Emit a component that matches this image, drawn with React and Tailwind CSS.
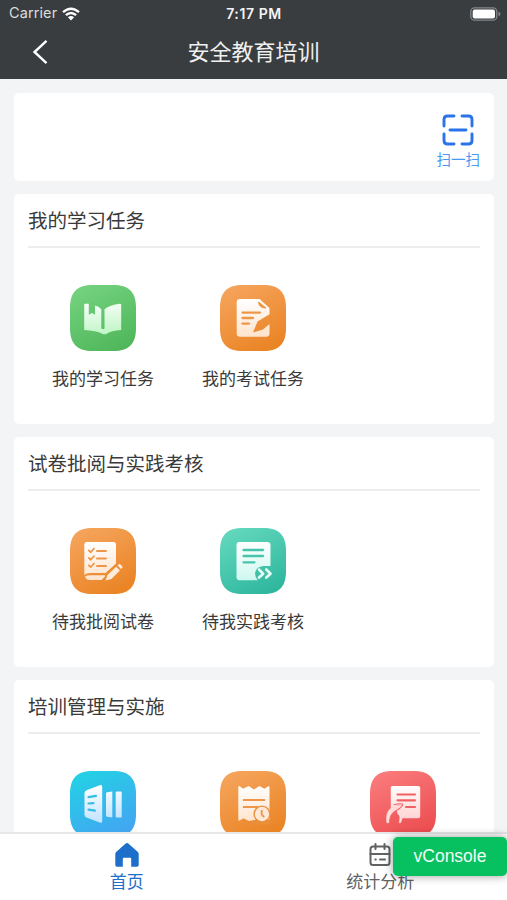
import React from 'react';

const Tile = ({ id, from, to, glyph = '#ffe3cb', children }) => (
  <svg viewBox="0 0 66 66" className="w-[66px] h-[66px] shrink-0">
    <defs>
      <linearGradient id={`${id}-bg`} x1="0.2" y1="0" x2="0.7" y2="1">
        <stop offset="0" stopColor={from} />
        <stop offset="1" stopColor={to} />
      </linearGradient>
      <linearGradient id={`${id}-fg`} gradientUnits="userSpaceOnUse" x1="30" y1="14" x2="34" y2="52">
        <stop offset="0" stopColor="#fff" />
        <stop offset="1" stopColor={glyph} />
      </linearGradient>
    </defs>
    <path
      d="M23 0h20c16 0 23 7 23 23v20c0 16-7 23-23 23H23C7 66 0 59 0 43V23C0 7 7 0 23 0z"
      fill={`url(#${id}-bg)`}
    />
    {children}
  </svg>
);

const StudyIcon = () => (
  <Tile id="study" from="#74d27f" to="#50b75b" glyph="#b9f5c0">
    <path
      d="M14.200 19.700q0-1 1-1h3.600v11l3.100-1.800 3.100 1.800v-9.200q3.600.8 6.300 3.800v19.200q1.700 1 3.200 0V24.300q5.300-4.600 15.400-5.600 1.300 0 1.300 1.200v25.200q-10 .8-14.400 3.600-2.400 1-4.600 0Q26 45.500 14.200 45z"
      fill="url(#study-fg)"
    />
  </Tile>
);

const ExamIcon = () => (
  <Tile id="exam" from="#f5a45c" to="#ea8424">
    <path
      d="M20 14h19.500l10 9v6.300L37.500 36.500 33 47.500 43 44.600l6.500-5.600v9.500q0 3.300-3.300 3.300H20q-3.300 0-3.300-3.300V17.300Q16.700 14 20 14z"
      fill="url(#exam-fg)"
    />
    <path d="M38.600 17q.2 6 7.400 6z" fill="#f09645" stroke="#f09645" strokeWidth="1" strokeLinejoin="round" />
    <g stroke="#ef9648" strokeWidth="2.300" strokeLinecap="round">
      <path d="M22.500 27.600h17.500M22.500 33h10.500M22.500 38.600h6.500" />
    </g>
  </Tile>
);

const ReviewIcon = () => (
  <Tile id="review" from="#f5a45c" to="#ea8424">
    <path
      d="M16.500 14h27q2.500 0 2.500 2.500v19L35.500 45H20q-3.500 0-5.700 2V16.500q0-2.500 2.200-2.500z"
      fill="url(#review-fg)"
    />
    <path d="M35 48.500l-3.500 3.600H20q-4 0-5-3.600 1.800-1.200 5-1.200h15z" fill="#ffe6d2" />
    <path d="M35.500 52.600l2-5.600 8.700-8.200 3.700 3.700-8.500 8.600zM47.600 37.500l1.300-1.200q.8-.6 1.600.2l1.700 1.700q.8.800.1 1.500l-1.300 1.300z" fill="#ffebd9" />
    <g fill="none" stroke="#ef9648" strokeWidth="2" strokeLinecap="round" strokeLinejoin="round">
      <path d="M18.800 22.400l1.900 1.900 3.300-3.700M18.800 29.900l1.900 1.900 3.300-3.700M18.800 37.300l1.900 1.900 3.300-3.700" strokeWidth="1.700" />
      <path d="M27 23h9M27 30.500h9M27 38h9" />
    </g>
  </Tile>
);

const PracticeIcon = () => (
  <Tile id="practice" from="#63d8bd" to="#2fb79e" glyph="#cdf8ef">
    <path
      d="M19.500 14h27.800q3.200 0 3.200 3.200V38h-7Q36 38.600 35 45q0 4 2.700 7.300H19.500q-3 0-3-3V17.200q0-3.200 3-3.200z"
      fill="url(#practice-fg)"
    />
    <g fill="none" stroke="#46c5ac" strokeWidth="2.300" strokeLinecap="round">
      <path d="M23.500 22h19.500M23.500 28h19.500M23.500 34.300h11" />
    </g>
    <g fill="none" stroke="#e5fbf6" strokeWidth="2.700" strokeLinecap="round" strokeLinejoin="round">
      <path d="M39 41.500l4.200 4.200L39 49.500M46.300 41.500l4.200 4.200-4.200 3.800" />
    </g>
  </Tile>
);

const TrainingIcon = () => (
  <Tile id="training" from="#23d1e4" to="#43a5f2" glyph="#bfe2ff">
    <path
      d="M17 19l12.700-4.800q2.500-.8 2.500 1.700v34q0 2.600-2.500 1.700L16.500 46.500q-2-.8-2-2.800V22q0-2.200 2.500-3z"
      fill="url(#training-fg)"
    />
    <path d="M37 21.200l5.300-.7V46.500l-5.300-.7q-1-.2-1-1.200V22.400q0-1 1-1.200z" fill="url(#training-fg)" />
    <rect x="45.700" y="20.400" width="6" height="26" rx="1" fill="url(#training-fg)" />
    <g fill="none" stroke="#33bee9" strokeWidth="2.200" strokeLinecap="round">
      <path d="M18.500 26.200l7.500-1.300M18.500 32.500l5-.3M18.500 38.600l6.500 1" />
    </g>
  </Tile>
);

const RecordIcon = () => (
  <Tile id="record" from="#f5a45c" to="#ea8424">
    <path
      d="M19.200 15l4 2.700 5.400-2.700 5.300 3.500 5.400-3.500 5.200 2.700 4-2.700 1 .7V49l-1 1.500-14-1.500-5.700 1-5.400-2.700-4 2.500-1.100-.7V15.700z"
      fill="url(#record-fg)"
    />
    <path d="M32 51.500l4-3h14v5H32z" fill="#eb8e3a" />
    <g stroke="#ef9648" strokeWidth="2.200" strokeLinecap="square">
      <path d="M24 29h20M24 36h13" />
    </g>
    <circle cx="42" cy="43" r="8.600" fill="#ea8f3d" />
    <circle cx="42" cy="43" r="7.200" fill="#ffe8d5" />
    <path d="M41.700 39v4.500l2.500 2.600" fill="none" stroke="#ed944a" strokeWidth="1.800" />
  </Tile>
);

const SignIcon = () => (
  <Tile id="sign" from="#fa7b7c" to="#ec4d50" glyph="#ffcfcf">
    <path
      d="M22.300 15H48.200q2 0 2 2v28.300q0 2-2 2H31.500L31 43l-2.500-4 4.500-5-5-.500-7.200 4V16.500q0-1.500 1.500-1.500z"
      fill="url(#sign-fg)"
    />
    {/* hand holding the sheet */}
    <path
      d="M16.800 51.800Q15.500 43 19.500 38.500 23.500 34 30.800 34.200q1.800.3.800 1.500L27.500 38q-5 2-7.300 6.500-1.500 3.500-1.400 7.300zM27.300 39.500l3.500-1.500 5 5-3.600 2.200q-.2 3.500-1.400 6.500h-1.700q1.100-4 .6-6.800-2.900-1.900-2.400-5.400z"
      fill="#ffdcdc"
      stroke="#ffdcdc"
      strokeWidth="0.500"
      strokeLinejoin="round"
    />
    <path d="M24 33.800q4.500-1.600 8.500-.8.800 2-4.200 5.500" fill="none" stroke="#f26a6c" strokeWidth="1.100" strokeLinecap="round" />
    <g stroke="#ef6164" strokeWidth="2.200" strokeLinecap="round">
      <path d="M27.500 23.500h17.500M27.500 29.300h17.500M36 36h9" />
    </g>
  </Tile>
);

const sections = [
  {
    title: '我的学习任务',
    items: [
      { label: '我的学习任务', icon: StudyIcon },
      { label: '我的考试任务', icon: ExamIcon }
    ]
  },
  {
    title: '试卷批阅与实践考核',
    items: [
      { label: '待我批阅试卷', icon: ReviewIcon },
      { label: '待我实践考核', icon: PracticeIcon }
    ]
  },
  {
    title: '培训管理与实施',
    items: [
      { label: '', icon: TrainingIcon },
      { label: '', icon: RecordIcon },
      { label: '', icon: SignIcon }
    ]
  }
];

const StatusBar = () => (
  <div className="grid grid-cols-3 items-center h-[27px] pl-[9px] pr-[6px] text-[14.5px] leading-none">
    <div className="flex items-center gap-[5px] text-[#d9dbdc]">
      <span className="tracking-[0.1px]">Carrier</span>
      <svg viewBox="0 0 18 14" className="w-[18px] h-[14px]" fill="none" stroke="#fff" strokeWidth="2.400">
        <path d="M1 5.200q8-7 16 0M3.900 8.200q5.100-4.400 10.200 0" />
        <path d="M5.900 10.300q3.100-2.400 6.200 0L9 13.500z" fill="#fff" stroke="none" />
      </svg>
    </div>
    <span className="text-center text-sm font-semibold text-[#f4f4f4] tracking-[0.6px] pr-[2px]">7:17 PM</span>
    <svg viewBox="0 0 31 14" className="w-[31px] h-[14px] justify-self-end">
      <rect x="0.800" y="0.800" width="26" height="12.400" rx="3.800" fill="none" stroke="#85888a" strokeWidth="1.300" />
      <rect x="2.700" y="2.600" width="22.300" height="8.800" rx="2" fill="#fff" />
      <path d="M28.500 4.800q2 .6 2 2.200t-2 2.200z" fill="#85888a" />
    </svg>
  </div>
);

const Section = ({ title, items }) => (
  <section className="h-[230px] shrink-0 bg-white rounded-[5px] px-[14px]">
    <h2 className="h-[54px] pt-[4px] flex items-center border-b-2 border-[#ebedee] text-[19.5px] text-[#3a3a3a]">
      {title}
    </h2>
    <div className="grid grid-cols-3 pt-[37px] pr-[2px]">
      {items.map(({ label, icon: Icon }, i) => (
        <div key={i} className="flex flex-col items-center">
          <Icon />
          <span className="mt-[15px] text-[17px] leading-[26px] text-[#3a3a3a] whitespace-nowrap">{label}</span>
        </div>
      ))}
    </div>
  </section>
);

const App = () => {
  return (
    <div
      className={
        'relative flex flex-col w-[507px] h-[900px] overflow-hidden bg-[#f2f4f6] ' +
        "font-[Inter,'Noto_Sans_CJK_SC',sans-serif]"
      }
    >
      <header className="h-[79px] shrink-0 bg-[#393d3f] text-white">
        <StatusBar />
        <div className="grid grid-cols-[80px_1fr_80px] items-center h-[52px]">
          <svg viewBox="0 0 16 26" className="w-4 h-[26px] ml-[32px] mb-[2px]" fill="none" stroke="#fff" strokeWidth="2.400">
            <path d="M14.500 1.800L2.500 13l12 11.200" />
          </svg>
          <h1 className="text-center text-[22px] leading-[30px] pb-[2px] text-[#f0f0f0]">安全教育培训</h1>
        </div>
      </header>

      <main className="flex-1 min-h-0 overflow-hidden flex flex-col gap-[13px] pt-[14px] pl-[14px] pr-[13px]">
        <div className="h-[88px] shrink-0 bg-white rounded-[5px] flex justify-end pr-[14px] pt-[21px]">
          <button className="flex flex-col items-center h-fit">
            <svg viewBox="0 0 32 32" className="w-8 h-8" fill="none" stroke="#2b73e8" strokeWidth="2.900" strokeLinecap="round">
              <path d="M2 12V5.500Q2 2 5.500 2H12M20 2h6.500Q30 2 30 5.500V12M30 20v6.500q0 3.500-3.500 3.500H20M12 30H5.500Q2 30 2 26.500V20M8 16h16" />
            </svg>
            <span className="mt-[4px] text-[14.5px] leading-[20px] text-[#4a98f2]">扫一扫</span>
          </button>
        </div>

        {sections.map((section) => (
          <Section key={section.title} {...section} />
        ))}
      </main>

      {/* Bottom tabs */}
      <nav className="h-[68px] shrink-0 grid grid-cols-2 bg-white border-t-2 border-[#e6e7e8]">
        <div className="flex flex-col items-center pt-[9px] text-[#1e6fca]">
          <svg viewBox="0 0 24 24" className="w-6 h-6" fill="currentColor">
            <path d="M10.400.700q1.600-1.200 3.200 0l9 8q1.100 1 1.100 2.400V22q0 1.700-1.700 1.700h-5.800v-7.900q0-1-1-1H8.800q-1 0-1 1v7.900H2Q.300 23.700.300 22V11.100q0-1.400 1.100-2.400z" />
          </svg>
          <span className="mt-[2px] text-[17px] leading-[26px]">首页</span>
        </div>
        <div className="flex flex-col items-center pt-[9px] text-[#606264]">
          <svg viewBox="0 0 24 24" className="w-6 h-6" fill="none" stroke="currentColor" strokeWidth="2" strokeLinecap="round">
            <rect x="2.500" y="3.500" width="19" height="18.500" rx="2.500" />
            <path d="M7.500 1v5M16.500 1v5M2.500 11H21.500M7.300 16.500h.500M12 16.500h5" />
          </svg>
          <span className="mt-[2px] text-[17px] leading-[26px]">统计分析</span>
        </div>
      </nav>

      <button className="absolute left-[393px] top-[837px] w-[114px] h-[39px] rounded-[5px] bg-[#07c160] text-[#f2fff7] text-[17.5px] font-['Liberation_Sans',sans-serif] shadow-[0_0_10px_rgba(0,0,0,0.4)]">
        vConsole
      </button>
    </div>
  );
};

export default App;
